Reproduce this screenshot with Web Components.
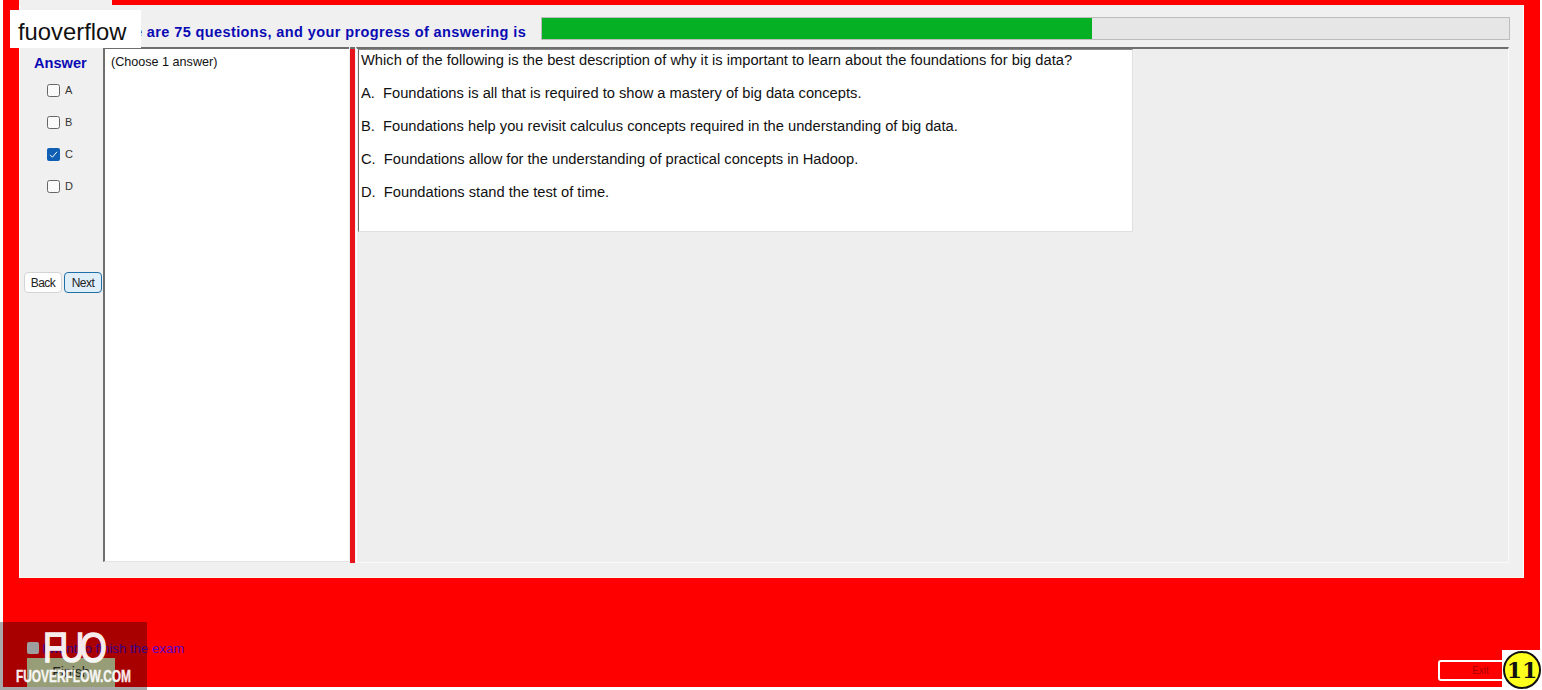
<!DOCTYPE html>
<html>
<head>
<meta charset="utf-8">
<title>Exam</title>
<style>
html, body { margin: 0; height: 690px; overflow: hidden; background: #fff; }
body { font-family: "Liberation Sans", Arial, sans-serif; }
</style>
</head>
<body>
<exam-app>
  <exam-progress slot="top" value="56.85">There are 75 questions, and your progress of answering is</exam-progress>
  <answer-column slot="side"></answer-column>
  <span slot="hint">(Choose 1 answer)</span>
  <question-card slot="question">
    <p>Which of the following is the best description of why it is important to learn about the foundations for big data?</p>
    <p>A.&nbsp; Foundations is all that is required to show a mastery of big data concepts.</p>
    <p>B.&nbsp; Foundations help you revisit calculus concepts required in the understanding of big data.</p>
    <p>C.&nbsp; Foundations allow for the understanding of practical concepts in Hadoop.</p>
    <p>D.&nbsp; Foundations stand the test of time.</p>
  </question-card>
  <finish-bar slot="footer"></finish-bar>
</exam-app>
<brand-badge></brand-badge>
<brand-watermark></brand-watermark>
<exam-timer>11</exam-timer>

<script>
class ExamApp extends HTMLElement {
  constructor() {
    super();
    this.attachShadow({ mode: "open" }).innerHTML = `
<style>
:host {
  display: flex;
  flex-direction: column;
  box-sizing: border-box;
  width: 1537px;
  height: 687px;
  margin-left: 3px;
  background: #ff0000;
}
.tab { width: 93px; height: 5px; margin-left: 16px; background: #f0f0f0; flex: none; }
.window {
  flex: none;
  display: flex;
  flex-direction: column;
  box-sizing: border-box;
  height: 573px;
  margin: 0 16px;
  padding: 0 14px 14px 0;
  background: #f0f0f0;
  border-right: 1px solid #fff;
  border-bottom: 1px solid #fff6ee;
  border-left: 1px solid #fff;
}
.main {
  flex: 1;
  display: flex;
  min-height: 0;
}
.choices {
  box-sizing: border-box;
  width: 246px;
  padding: 6px 6px;
  background: #fff;
  border-left: 2px solid #6e6e6e;
  border-top: 2px solid #6e6e6e;
  border-bottom: 1px solid #e4e4e4;
  font-size: 12.6px;
  color: #111;
  margin-bottom: 1px;
}
.split {
  width: 5px;
  margin-left: 1px;
  background: #e8141c;
  border-top: 2px solid #6e6e6e;
  box-sizing: border-box;
}
.right {
  flex: 1;
  margin-left: 1px;
  background: #eeeeee;
  border-top: 2px solid #6e6e6e;
  border-left: 1px solid #fff;
  border-right: 1px solid #fafafa;
  border-bottom: 1px solid #fafafa;
}
.footer { flex: 1; min-height: 0; }
</style>
<div class="tab"></div>
<div class="window">
  <slot name="top"></slot>
  <div class="main">
    <slot name="side"></slot>
    <div class="choices"><slot name="hint"></slot></div>
    <div class="split"></div>
    <div class="right"><slot name="question"></slot></div>
  </div>
</div>
<div class="footer"><slot name="footer"></slot></div>`;
  }
}

class ExamProgress extends HTMLElement {
  constructor() {
    super();
    var value = this.getAttribute("value");
    this.attachShadow({ mode: "open" }).innerHTML = `
<style>
:host {
  display: flex;
  align-items: flex-start;
  box-sizing: border-box;
  height: 42px;
  margin-right: -1px;
  padding: 12px 0 0 81px;
  flex: none;
}
.label {
  width: 440px;
  flex: none;
  font-size: 14.5px;
  line-height: 17px;
  padding-top: 7px;
  font-weight: bold;
  letter-spacing: 0.39px;
  color: #0a0ab4;
  white-space: nowrap;
}
.track {
  flex: 1;
  height: 23px;
  box-sizing: border-box;
  background: #e6e6e6;
  border: 1px solid #bcbcbc;
}
.fill { height: 100%; width: ${value}%; background: #06b025; }
</style>
<div class="label"><slot></slot></div>
<div class="track"><div class="fill"></div></div>`;
  }
}

class AnswerColumn extends HTMLElement {
  constructor() {
    super();
    this.attachShadow({ mode: "open" }).innerHTML = `
<style>
:host {
  display: flex;
  flex-direction: column;
  box-sizing: border-box;
  width: 83px;
  flex: none;
  padding-top: 8px;
}
h3 {
  margin: 0 0 11px 14px;
  font-size: 14.6px;
  line-height: 16px;
  font-weight: bold;
  color: #0a0ab4;
}
.list {
  display: flex;
  flex-direction: column;
  gap: 16px;
  padding-left: 27px;
}
.buttons {
  display: flex;
  gap: 2px;
  margin-top: 78px;
  padding-left: 4px;
}
</style>
<h3>Answer</h3>
<div class="list">
  <answer-check>A</answer-check>
  <answer-check>B</answer-check>
  <answer-check checked>C</answer-check>
  <answer-check>D</answer-check>
</div>
<div class="buttons">
  <nav-button>Back</nav-button>
  <nav-button focused>Next</nav-button>
</div>`;
  }
}

class AnswerCheck extends HTMLElement {
  constructor() {
    super();
    var tick = this.hasAttribute("checked")
      ? `<svg width="13" height="13" viewBox="0 0 13 13"><rect width="13" height="13" rx="2" fill="#0f5fb4"/><path d="M3 6.8 5.4 9.2 10 3.8" fill="none" stroke="#fff" stroke-width="1"/></svg>`
      : `<svg width="13" height="13" viewBox="0 0 13 13"><rect x=".5" y=".5" width="12" height="12" rx="2" fill="#fafafa" stroke="#666"/></svg>`;
    this.attachShadow({ mode: "open" }).innerHTML = `
<style>
:host {
  display: flex;
  align-items: center;
  gap: 5px;
  height: 16px;
  font-size: 11px;
  color: #333;
}
svg { display: block; }
</style>
${tick}<span><slot></slot></span>`;
  }
}

class NavButton extends HTMLElement {
  constructor() {
    super();
    var focused = this.hasAttribute("focused");
    this.attachShadow({ mode: "open" }).innerHTML = `
<style>
:host {
  display: flex;
  align-items: center;
  justify-content: center;
  box-sizing: border-box;
  width: 38px;
  height: 21px;
  border-radius: 4px;
  border: ${focused ? "1px solid #1f6fa8" : "1px solid #d4d4d4"};
  background: ${focused ? "#e0eef9" : "#fdfdfd"};
  font-size: 12px;
  letter-spacing: -0.5px;
  color: #222;
}
</style>
<slot></slot>`;
  }
}

class QuestionCard extends HTMLElement {
  constructor() {
    super();
    this.attachShadow({ mode: "open" }).innerHTML = `
<style>
:host {
  display: block;
  box-sizing: border-box;
  width: 775px;
  height: 183px;
  margin-left: 1px;
  padding: 2px 2px 0;
  background: #fff;
  border-top: 1px solid #8a8a8a;
  border-left: 1px solid #6e6e6e;
  border-right: 1px solid #e0e0e0;
  border-bottom: 1px solid #e0e0e0;
  font-size: 14.7px;
  line-height: 17px;
  color: #111;
}
::slotted(p) { margin: 0 0 16px; white-space: nowrap; }
</style>
<slot></slot>`;
  }
}

class FinishBar extends HTMLElement {
  constructor() {
    super();
    this.attachShadow({ mode: "open" }).innerHTML = `
<style>
:host {
  display: flex;
  box-sizing: border-box;
  height: 100%;
  padding: 63px 17px 0 24px;
  justify-content: space-between;
  font-size: 13.2px;
}
.left { display: flex; flex-direction: column; }
.confirm { display: flex; align-items: center; gap: 3px; height: 14px; color: #5a00c8; white-space: nowrap; }
.box { width: 12px; height: 12px; border-radius: 2px; background: #f0f0f0; }
.finish {
  width: 88px;
  height: 30px;
  margin-top: 3px;
  background: #e6efb4;
  color: #333;
  text-align: center;
  line-height: 28px;
  font-size: 14px;
}
.exit {
  box-sizing: border-box;
  width: 85px;
  height: 21px;
  margin-top: 19px;
  border: 2px solid #fff;
  border-radius: 3px;
  color: #a80000;
  font-size: 10px;
  line-height: 17px;
  text-align: center;
}
</style>
<div class="left">
  <div class="confirm"><span class="box"></span><span>I want to finish the exam</span></div>
  <div class="finish">Finish</div>
</div>
<div class="exit">Exit</div>`;
  }
}

class BrandBadge extends HTMLElement {
  constructor() {
    super();
    this.attachShadow({ mode: "open" }).innerHTML = `
<style>
:host {
  position: absolute;
  left: 10px;
  top: 10px;
  box-sizing: border-box;
  width: 131px;
  height: 38px;
  padding-left: 8px;
  background: #fff;
  color: #111;
  font: 23.8px/43px "Liberation Sans", Arial, sans-serif;
}
</style>
fuoverflow`;
  }
}

class BrandWatermark extends HTMLElement {
  constructor() {
    super();
    this.attachShadow({ mode: "open" }).innerHTML = `
<style>
:host {
  position: absolute;
  left: 0;
  top: 622px;
  width: 147px;
  height: 68px;
  background: rgba(0, 0, 0, .34);
  color: #fff;
  overflow: hidden;
}
.logo {
  position: absolute;
  left: 43px;
  top: 2px;
  font: 43px/46px "Liberation Sans", Arial, sans-serif;
  letter-spacing: -5.5px;
  -webkit-text-stroke: 1.6px #fff;
  transform: scaleX(.8);
  transform-origin: left center;
  opacity: .92;
}
.url {
  position: absolute;
  left: 16px;
  top: 46px;
  font: bold 17px/18px "Liberation Sans", Arial, sans-serif;
  -webkit-text-stroke: .4px #fff;
  transform: scaleX(.7);
  transform-origin: left center;
  white-space: nowrap;
  opacity: .92;
}
</style>
<div class="logo">FUO</div>
<div class="url">FUOVERFLOW.COM</div>`;
  }
}

class ExamTimer extends HTMLElement {
  constructor() {
    super();
    this.attachShadow({ mode: "open" }).innerHTML = `
<style>
:host {
  position: absolute;
  left: 1502px;
  top: 650px;
  width: 40px;
  height: 40px;
  display: flex;
  align-items: center;
  justify-content: center;
  background: #fff;
}
div {
  box-sizing: border-box;
  width: 38px;
  height: 38px;
  border: 2px solid #111;
  border-radius: 50%;
  background: #ffff1e;
  text-align: center;
  font: bold 22px/34px "DejaVu Serif", "Liberation Serif", serif;
  color: #111;
}
</style>
<div><slot></slot></div>`;
  }
}

customElements.define("exam-app", ExamApp);
customElements.define("exam-progress", ExamProgress);
customElements.define("answer-column", AnswerColumn);
customElements.define("answer-check", AnswerCheck);
customElements.define("nav-button", NavButton);
customElements.define("question-card", QuestionCard);
customElements.define("finish-bar", FinishBar);
customElements.define("brand-badge", BrandBadge);
customElements.define("brand-watermark", BrandWatermark);
customElements.define("exam-timer", ExamTimer);
</script>
</body>
</html>
